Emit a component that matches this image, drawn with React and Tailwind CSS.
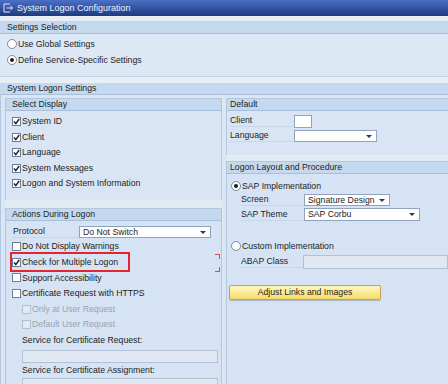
import clsx from 'clsx';

function Box({ checked, disabled }) {
  return (
    <span
      className={clsx(
        'flex h-[9px] w-[9px] shrink-0 items-center justify-center border',
        disabled ? 'border-[#b3c0cf] bg-[#e2eaf4]' : 'border-[#6e7e92] bg-white'
      )}
    >
      {checked && (
        <svg viewBox="0 0 7 7" className="h-[7px] w-[7px]">
          <path d="M1 3.6 L2.8 5.6 L6.2 1" fill="none" stroke="#15233a" strokeWidth="1.5" />
        </svg>
      )}
    </span>
  );
}

function Check({ label, checked, disabled, className }) {
  return (
    <div className={clsx('flex items-center gap-[1px]', className)}>
      <Box checked={checked} disabled={disabled} />
      <span className={disabled ? 'text-[#9aa3ad]' : ''}>{label}</span>
    </div>
  );
}

function Radio({ label, checked, className }) {
  return (
    <div className={clsx('flex items-center gap-[1px]', className)}>
      <span className="flex h-[10px] w-[10px] shrink-0 items-center justify-center rounded-full border border-[#7b8ca2] bg-white">
        {checked && <span className="h-[4px] w-[4px] rounded-full bg-[#1c1c1c]" />}
      </span>
      <span>{label}</span>
    </div>
  );
}

function Select({ value, className }) {
  return (
    <div className={clsx('flex items-center justify-between border border-[#8ea3be] bg-white pl-[3px] pr-[4px]', className)}>
      <span>{value}</span>
      <svg viewBox="0 0 6 3" className="h-[3px] w-[6px]">
        <path d="M0 0 H6 L3 3 Z" fill="#1f3a6e" />
      </svg>
    </div>
  );
}

function Header({ children, className }) {
  return (
    <div className={clsx('flex h-[12px] items-center border-b border-[#a8bfdb] bg-[#c4d8ee]', className)}>
      {children}
    </div>
  );
}

function Label({ children, className }) {
  return (
    <div className={clsx('flex h-[12px] items-center border-b border-[#c9d7e9]', className)}>{children}</div>
  );
}

function TitleBar() {
  return (
    <div className="flex h-[16px] items-center gap-[3px] bg-linear-to-b from-[#4a70c6] to-[#1e3b80] pl-[3px] text-[9px] text-[#eef2fb]">
      <svg viewBox="0 0 11 10" className="h-[10px] w-[11px]">
        <path d="M7 1 H1 V9 H7" fill="none" stroke="#dfe6f5" strokeWidth="1" />
        <path d="M3.5 5 H9.5 M7.5 3 L9.5 5 L7.5 7" fill="none" stroke="#dfe6f5" strokeWidth="1" />
      </svg>
      <span>System Logon Configuration</span>
    </div>
  );
}

export default function App() {
  return (
    <div className="h-[384px] w-[448px] overflow-hidden bg-[#dae6f5] font-['Liberation_Sans',Arial,sans-serif] text-[8.7px] leading-none text-[#1d1d1d]">
      <TitleBar />
      <div className="h-[6px] border-b border-[#c8d4e3] bg-[#e9eef5]" />

      <Header className="pl-[7px]">Settings Selection</Header>
      <div className="flex h-[43px] flex-col border-b border-[#c2d1e4] bg-[#dde8f5] pl-[7px] pt-[2px]">
        <Radio label="Use Global Settings" className="h-[16px]" />
        <Radio label="Define Service-Specific Settings" checked className="h-[16px]" />
      </div>
      <div className="h-[6px] bg-[#e8eef6]" />

      <Header className="pl-[7px]">System Logon Settings</Header>

      <div className="flex border-l border-[#b3c7df]">
        {/* left column */}
        <div className="w-[221px] shrink-0 pl-[4px]">
          <div className="h-[3px]" />
          <div className="border-x border-t border-[#b3c7df] bg-[#d9e5f4]">
            <Header className="pl-[6px]">Select Display</Header>
            <div className="flex h-[89px] flex-col pl-[6px] pt-[3px]">
              <Check label="System ID" checked className="h-[15.5px]" />
              <Check label="Client" checked className="h-[15.5px]" />
              <Check label="Language" checked className="h-[15.5px]" />
              <Check label="System Messages" checked className="h-[15.5px]" />
              <Check label="Logon and System Information" checked className="h-[15.5px]" />
            </div>
          </div>
          <div className="h-[8px] border-t-2 border-[#e4ebf4] bg-[#e1e9f3]" />
          <div className="border-x border-t border-[#b3c7df] bg-[#d6e3f4]">
            <Header className="pl-[6px]">Actions During Logon</Header>
            <div className="flex flex-col pl-[6px] pt-[4px]">
              <div className="flex h-[14px] items-center">
                <Label className="w-[67px] pl-[1px]">Protocol</Label>
                <Select value="Do Not Switch" className="h-[12px] w-[132px]" />
              </div>
              <Check label="Do Not Display Warnings" className="h-[15.6px]" />
              <div className="relative">
                <Check label="Check for Multiple Logon" checked className="h-[15.6px]" />
                <div className="absolute left-[-2px] top-[-3px] h-[20px] w-[120px] border-2 border-[#e3262b]" />
                <div className="absolute left-[203px] top-[-1px] h-[5px] w-[5px] border-r border-t border-[#d84a4e]" />
                <div className="absolute left-[203px] top-[12px] h-[5px] w-[5px] border-b border-r border-[#d84a4e]" />
              </div>
              <Check label="Support Accessibility" className="h-[15.6px]" />
              <Check label="Certificate Request with HTTPS" className="h-[15.6px]" />
              <Check label="Only at User Request" disabled className="h-[15.6px] pl-[10px]" />
              <Check label="Default User Request" disabled className="h-[15.6px] pl-[10px]" />
              <div className="flex h-[15px] items-center pl-[10px]">Service for Certificate Request:</div>
              <div className="ml-[10px] mt-[2px] h-[13px] w-[196px] border border-[#b2c1d3] bg-[#dfe8f3]" />
              <div className="flex h-[15px] items-center pl-[10px]">Service for Certificate Assignment:</div>
              <div className="ml-[10px] h-[13px] w-[196px] border border-[#b2c1d3] bg-[#dfe8f3]" />
            </div>
          </div>
        </div>

        {/* right column */}
        <div className="flex-1 border-l border-[#e2e9f3] pl-[3px]">
          <div className="h-[3px]" />
          <div className="border-l border-t border-[#b3c7df] bg-[#d9e5f4]">
            <Header className="pl-[3px]">Default</Header>
            <div className="flex h-[44px] flex-col pl-[3px] pt-[3px]">
              <div className="flex h-[14px] items-center">
                <Label className="w-[63px]">Client</Label>
                <div className="ml-[1px] h-[13px] w-[18px] border border-[#8ea3be] bg-white" />
              </div>
              <div className="flex h-[16px] items-center">
                <Label className="w-[63px]">Language</Label>
                <Select value="" className="ml-[1px] h-[12px] w-[83px]" />
              </div>
            </div>
          </div>
          <div className="h-[6px] border-t-2 border-[#e4ebf4] bg-[#e1e9f3]" />
          <div className="h-[300px] border-l border-t border-[#b3c7df] bg-[#d6e3f4]">
            <Header className="pl-[3px]">Logon Layout and Procedure</Header>
            <div className="flex flex-col pl-[4px] pt-[5px]">
              <Radio label="SAP Implementation" checked className="h-[14px]" />
              <div className="flex h-[14px] items-center pl-[10px]">
                <Label className="w-[63px]">Screen</Label>
                <Select value="Signature Design" className="h-[12px] w-[86px]" />
              </div>
              <div className="flex h-[15px] items-center pl-[10px]">
                <Label className="w-[63px]">SAP Theme</Label>
                <Select value="SAP Corbu" className="h-[13px] w-[116px]" />
              </div>
              <Radio label="Custom Implementation" className="mt-[17px] h-[14px]" />
              <div className="mt-[2px] flex h-[14px] items-center pl-[10px]">
                <Label className="w-[62px]">ABAP Class</Label>
                <div className="h-[14px] flex-1 border border-[#b2c1d3] bg-[#dfe8f3]" />
              </div>
              <div className="ml-[-2px] mt-[16px] flex h-[15px] w-[152px] items-center justify-center rounded-[2px] border border-[#c4a44a] bg-linear-to-b from-[#fff7bd] to-[#f6dc6c] text-[#2a2418] shadow-[0_1px_1px_rgba(0,0,0,0.2)]">
                Adjust Links and Images
              </div>
            </div>
          </div>
        </div>
      </div>
    </div>
  );
}
